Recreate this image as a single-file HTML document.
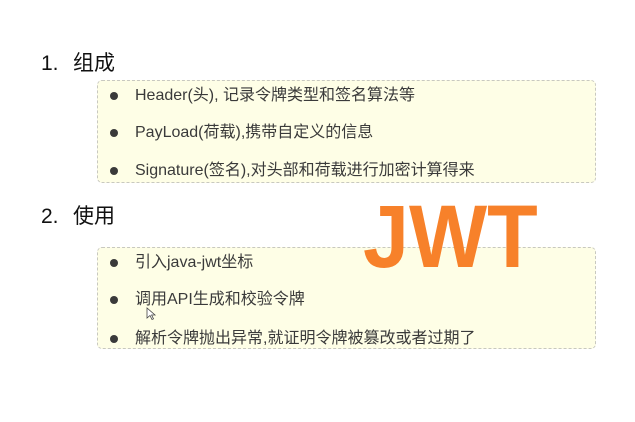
<!DOCTYPE html>
<html><head><meta charset="utf-8"><style>
body{margin:0;width:635px;height:422px;background:#fff;position:relative;overflow:hidden;font-family:"Liberation Sans","Noto Sans CJK SC",sans-serif;color:#333;}
.h{position:absolute;left:41px;font-size:21px;color:#111;line-height:1;}
.h span{display:inline-block;width:32px;}
.box{position:absolute;left:97px;width:497px;background:#fefee6;border:1px dashed #c8c8c0;border-radius:5px;}
.it{position:absolute;left:37px;font-size:16px;line-height:1;color:#3a3a3a;white-space:nowrap;}
.dot{position:absolute;left:12px;width:8px;height:8px;border-radius:50%;background:#3a3a3a;}
.jwt{position:absolute;left:363px;top:192px;font-size:89px;font-weight:bold;color:#f7812a;letter-spacing:0;line-height:1;transform:scaleX(0.93);transform-origin:left top;}
</style></head><body>
<div class="h" style="top:53px"><span>1.</span>组成</div>
<div class="box" style="top:80px;height:101px">
 <div class="dot" style="top:11px"></div><div class="it" style="top:7px">Header(头), 记录令牌类型和签名算法等</div>
 <div class="dot" style="top:48px"></div><div class="it" style="top:44px">PayLoad(荷载),携带自定义的信息</div>
 <div class="dot" style="top:86px"></div><div class="it" style="top:82px">Signature(签名),对头部和荷载进行加密计算得来</div>
</div>
<div class="h" style="top:206px"><span>2.</span>使用</div>
<div class="box" style="top:247px;height:100px">
 <div class="dot" style="top:11px"></div><div class="it" style="top:7px">引入java-jwt坐标</div>
 <div class="dot" style="top:48px"></div><div class="it" style="top:44px">调用API生成和校验令牌</div>
 <div class="dot" style="top:87px"></div><div class="it" style="top:83px">解析令牌抛出异常,就证明令牌被篡改或者过期了</div>
</div>
<svg style="position:absolute;left:146px;top:307px" width="12" height="14" viewBox="0 0 12 14"><path d="M1 1 L1 11 L4 8.5 L6 12.5 L7.5 11.8 L5.6 8 L9 8 Z" fill="#fff" stroke="#444" stroke-width="0.8"/></svg>
<div class="jwt">JWT</div>
</body></html>
